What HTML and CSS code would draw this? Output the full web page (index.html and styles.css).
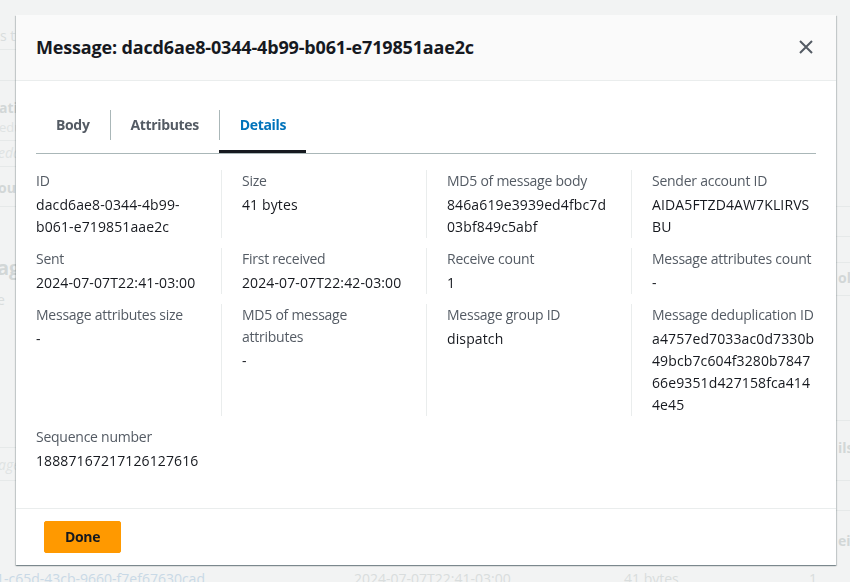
FILE: index.html
```html
<!DOCTYPE html>
<html lang="en">
<head>
<meta charset="utf-8">
<title>Message details</title>
<link rel="stylesheet" href="styles.css">
</head>
<body>
<div class="backdrop" aria-hidden="true">
  <div class="bg-cols">
    <div class="bg-left">
      <div class="bg-row r1"><span class="bg-text">s that are</span></div>
      <div class="bg-row r2"></div>
      <div class="bg-row r3"><span class="bg-strong">ation</span><span class="bg-small">edu</span></div>
      <div class="bg-row r4"><span class="bg-italic">edd</span></div>
      <div class="bg-row r5"><span class="bg-strong">outs</span></div>
      <div class="bg-row r6"><span class="bg-heading">age</span><span class="bg-text bg-e">e</span></div>
      <div class="bg-row r7"><span class="bg-italic">age</span></div>
    </div>
    <div class="bg-right">
      <div class="bg-row s1"></div>
      <div class="bg-row s2"></div>
      <div class="bg-row s3"></div>
      <div class="bg-row s4"><span class="bg-strong">oll for</span></div>
      <div class="bg-row s5"></div>
      <div class="bg-row s6"><span class="bg-strong">ils</span></div>
      <div class="bg-row s7"></div>
      <div class="bg-row s8"><span class="bg-strong">eive</span></div>
    </div>
  </div>
  <div class="bg-bottom">
    <span class="bg-link">1-c65d-43cb-9660-f7ef67630cad</span>
    <span class="bg-text">2024-07-07T22:41-03:00</span>
    <span class="bg-text">41 bytes</span>
    <span class="bg-text">1</span>
  </div>
</div>

<div class="modal" role="dialog" aria-labelledby="modal-title">
  <div class="modal-header">
    <h2 id="modal-title" class="modal-title">Message: dacd6ae8-0344-4b99-b061-e719851aae2c</h2>
    <button class="close-btn" aria-label="Close">
      <svg width="16" height="16" viewBox="0 0 16 16" aria-hidden="true"><path d="M2 2 L14 14 M14 2 L2 14" stroke="#545b64" stroke-width="2" fill="none"/></svg>
    </button>
  </div>
  <div class="modal-body">
    <div class="tabs" role="tablist">
      <div class="tab" role="tab"><span class="tab-label first">Body</span></div>
      <div class="tab" role="tab"><span class="tab-label">Attributes</span></div>
      <div class="tab active" role="tab"><span class="tab-label">Details</span></div>
    </div>
    <div class="tab-content">
      <div class="details-grid">
        <div class="cell"><div class="label">ID</div><div class="value">dacd6ae8-0344-4b99-b061-e719851aae2c</div></div>
        <div class="cell divided"><div class="label">Size</div><div class="value">41 bytes</div></div>
        <div class="cell divided"><div class="label">MD5 of message body</div><div class="value">846a619e3939ed4fbc7d03bf849c5abf</div></div>
        <div class="cell divided"><div class="label">Sender account ID</div><div class="value">AIDA5FTZD4AW7KLIRVSBU</div></div>

        <div class="cell"><div class="label">Sent</div><div class="value">2024-07-07T22:41-03:00</div></div>
        <div class="cell divided"><div class="label">First received</div><div class="value">2024-07-07T22:42-03:00</div></div>
        <div class="cell divided"><div class="label">Receive count</div><div class="value">1</div></div>
        <div class="cell divided"><div class="label">Message attributes count</div><div class="value">-</div></div>

        <div class="cell"><div class="label">Message attributes size</div><div class="value">-</div></div>
        <div class="cell divided"><div class="label">MD5 of message attributes</div><div class="value">-</div></div>
        <div class="cell divided"><div class="label">Message group ID</div><div class="value">dispatch</div></div>
        <div class="cell divided"><div class="label">Message deduplication ID</div><div class="value">a4757ed7033ac0d7330b49bcb7c604f3280b784766e9351d427158fca4144e45</div></div>

        <div class="cell"><div class="label">Sequence number</div><div class="value">18887167217126127616</div></div>
      </div>
    </div>
  </div>
  <div class="modal-footer">
    <button class="btn-primary">Done</button>
  </div>
</div>
</body>
</html>
```

FILE: styles.css
```css
* { box-sizing: border-box; }

html, body {
  margin: 0;
  padding: 0;
  height: 582px;
  overflow: hidden;
}

body {
  background: #f2f3f3;
  font-family: "Open Sans", "Noto Sans", sans-serif;
  font-size: 14px;
  line-height: 22px;
  color: #16191f;
}

/* ---------- faded page behind the dialog ---------- */
.backdrop {
  width: 850px;
  height: 582px;
  overflow: hidden;
  white-space: nowrap;
}

.bg-cols {
  display: flex;
  height: 569px;
}

.bg-left { width: 425px; }
.bg-right { width: 425px; }

.bg-row {
  display: flex;
  flex-direction: column;
  border-bottom: 1px solid #e6e9e9;
}

.bg-text { color: #d9dddd; line-height: 20px; }
.bg-strong { color: #d2d7d7; font-weight: 700; line-height: 20px; }
.bg-small { color: #dfe3e3; font-size: 13px; line-height: 18px; }
.bg-italic { color: #dfe3e3; font-style: italic; line-height: 20px; }
.bg-heading { color: #d2d7d7; font-weight: 700; font-size: 20px; line-height: 24px; }
.bg-e { margin-top: 10px; }
.bg-link { color: #c9d9e6; line-height: 20px; }

.r1 { height: 50px; padding-top: 26px; }
.r2 { height: 31px; }
.r3 { height: 60px; padding-top: 17px; margin-left: -1px; }
.r4 { height: 26px; padding-top: 2px; margin-left: -2px; }
.r5 { height: 40px; padding-top: 11px; margin-left: -2px; }
.r6 { height: 241px; padding-top: 49px; margin-left: -3px; }
.r7 { height: 33px; padding-top: 7px; margin-left: -2px; }

.bg-right .bg-row { padding-left: 413px; }
.s1 { height: 207px; }
.s2 { height: 30px; }
.s3 { height: 26px; }
.s4 { height: 33px; padding-top: 5px; }
.s5 { height: 125px; }
.s6 { height: 60px; padding-top: 17px; }
.s7 { height: 30px; }
.s8 { height: 60px; padding-top: 20px; border-bottom: none; }

.bg-bottom {
  display: grid;
  grid-template-columns: 358px 270px 185px auto;
  margin-left: -4px;
}

/* ---------- dialog ---------- */
.modal {
  position: fixed;
  left: 16px;
  top: 15px;
  width: 820px;
  background: #ffffff;
  box-shadow: 0 1px 1px 0 rgba(0, 28, 36, 0.3),
              1px 1px 1px 0 rgba(0, 28, 36, 0.15),
              -1px 1px 1px 0 rgba(0, 28, 36, 0.15);
}

.modal-header {
  display: flex;
  align-items: center;
  justify-content: space-between;
  padding: 21px 20px 22px;
  background: #fafafa;
  border-bottom: 1px solid #eaeded;
}

.modal-title {
  margin: 0;
  font-size: 18px;
  line-height: 22px;
  font-weight: 700;
  letter-spacing: -0.16px;
  color: #16191f;
}

.close-btn {
  display: flex;
  padding: 0;
  margin-right: 2px;
  border: none;
  background: transparent;
  cursor: pointer;
}

.modal-body {
  padding: 20px 20px 36px;
}

.tabs {
  display: flex;
  border-bottom: 1px solid #aab7b8;
}

.tab {
  position: relative;
  padding: 9px 0 13px;
}

.tab-label {
  display: block;
  padding: 4px 20px;
  line-height: 22px;
  font-weight: 700;
  letter-spacing: -0.35px;
  color: #545b64;
  border-left: 1px solid #aab7b8;
}

.tab-label.first { border-left: none; }

.tab.active .tab-label { color: #0073bb; }

.tab.active::after {
  content: "";
  position: absolute;
  left: 0;
  right: 0;
  bottom: 0;
  height: 3px;
  background: #16191f;
}

.tab-content {
  padding-top: 16px;
}

.details-grid {
  display: grid;
  grid-template-columns: repeat(4, 205px);
  row-gap: 10px;
  margin: 0 -20px;
}

.cell {
  padding: 0 20px;
  min-width: 0;
}

.cell.divided {
  border-left: 1px solid #eaeded;
}

.label {
  color: #545b64;
  letter-spacing: -0.25px;
  margin-bottom: 2px;
}

.value {
  color: #16191f;
  letter-spacing: 0.12px;
  overflow-wrap: anywhere;
}

.modal-footer {
  border-top: 1px solid #eaeded;
  padding: 12px 28px;
}

.btn-primary {
  display: inline-block;
  padding: 4px 20px;
  font-family: inherit;
  font-size: 14px;
  line-height: 22px;
  font-weight: 700;
  letter-spacing: -0.35px;
  color: #16191f;
  background: #ff9900;
  border: 1px solid #ff9900;
  border-radius: 2px;
  cursor: pointer;
}
```
